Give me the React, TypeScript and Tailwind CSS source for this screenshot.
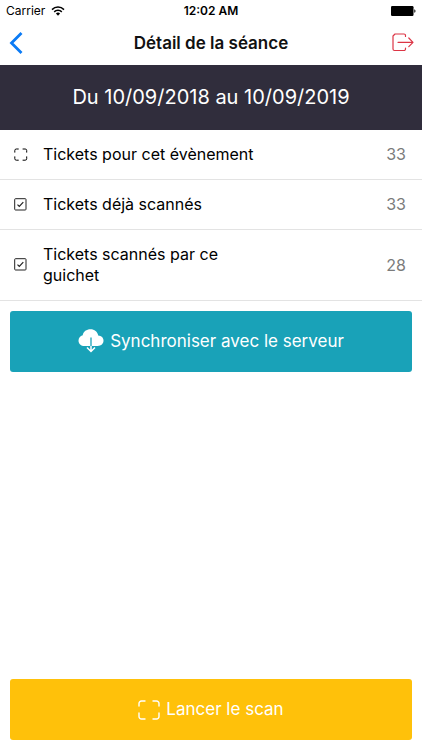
const ScanIcon = () => (
  <svg viewBox="0 0 22 20" className="w-[22px] h-5" fill="none" stroke="currentColor" strokeWidth="1.4" strokeLinecap="round" aria-hidden="true">
    <path d="M1 6V3.500A2.500 2.500 0 0 1 3.500 1H7M15 1h3.500A2.500 2.500 0 0 1 21 3.500V6M21 13v3.500a2.500 2.500 0 0 1-2.500 2.500H15M7 19H3.500A2.500 2.500 0 0 1 1 16.500V13" />
  </svg>
);

const SmallScanIcon = () => (
  <svg viewBox="0 0 14 14" className="w-[14px] h-[14px]" fill="none" stroke="currentColor" strokeWidth="1" strokeLinecap="round" aria-hidden="true">
    <path d="M.8 4.200V2.500A1.500 1.500 0 0 1 2.300 1h2M9 1h2.200a1.500 1.500 0 0 1 1.500 1.500v1.700M12.700 8.800v1.900a1.500 1.500 0 0 1-1.500 1.500H9M4.300 12.200h-2a1.500 1.500 0 0 1-1.500-1.500V8.800" />
  </svg>
);

const CheckIcon = () => (
  <svg viewBox="0 0 14 14" className="w-[14px] h-[14px]" fill="none" stroke="#222" aria-hidden="true">
    <rect x=".7" y=".7" width="11.300" height="11.300" rx=".8" />
    <path d="M3.500 6.600l1.800 1.800 4-4.200" strokeWidth="1.200" />
  </svg>
);

const rows = [
  { icon: <SmallScanIcon />, label: 'Tickets pour cet évènement', count: 33 },
  { icon: <CheckIcon />, label: 'Tickets déjà scannés', count: 33 },
  { icon: <CheckIcon />, label: 'Tickets scannés par ce guichet', count: 28 },
];

const StatusBar = () => (
  <div className="grid grid-cols-3 items-center h-[22px] px-1.5 text-xs">
    <div className="flex items-center gap-1.5">
      <span>Carrier</span>
      <svg viewBox="0 0 14 10" className="w-[14px] h-[10px]" fill="none" stroke="black" strokeWidth="1.500" aria-hidden="true">
        <path d="M1 3.600a8.500 8.500 0 0 1 12 0M3.200 5.900a5.400 5.400 0 0 1 7.600 0" />
        <path d="M7 9.800L4.900 7.600a3 3 0 0 1 4.200 0z" fill="black" stroke="none" />
      </svg>
    </div>
    <span className="text-center font-semibold">12:02 AM</span>
    <svg viewBox="0 0 25 10" className="w-[25px] h-[10px] justify-self-end" aria-hidden="true">
      <rect width="22.500" height="10" rx="1.200" />
      <path d="M23.300 3.200c1.600.5 1.600 3.100 0 3.600z" />
    </svg>
  </div>
);

const Header = () => (
  <header className="flex items-center justify-between h-[43px] px-2">
    <button type="button" aria-label="Retour" className="w-6 text-[#0b7bf5]">
      <svg viewBox="0 0 16 24" className="w-4 h-6" fill="none" stroke="currentColor" strokeWidth="2.800" aria-hidden="true">
        <path d="M13.500 1L3.500 11l10 10" />
      </svg>
    </button>
    <h1 className="text-[17px] font-semibold text-[#111]">Détail de la séance</h1>
    <button type="button" aria-label="Déconnexion" className="w-6 text-[#dc3545]">
      <svg viewBox="0 0 24 24" className="w-6 h-6" fill="none" stroke="currentColor" strokeWidth="1.200" strokeLinecap="round" strokeLinejoin="round" aria-hidden="true">
        <path d="M15.500 4.500V3.500a1.500 1.500 0 0 0-1.500-1.500H5L3 4v13a1.500 1.500 0 0 0 1.500 1.500H14a1.500 1.500 0 0 0 1.500-1.500v-1M8 10.300h15M18.800 6l4.200 4.300-4.200 4.300" />
      </svg>
    </button>
  </header>
);

const App = () => {
  return (
    <div className="flex flex-col min-h-screen bg-white text-black font-['Inter',sans-serif]">
      <StatusBar />
      <Header />
      <div className="bg-[#302d3c] text-white text-center text-xl leading-[25px] py-5">
        Du 10/09/2018 au 10/09/2019
      </div>
      <ul>
        {rows.map(row => (
          <li key={row.label} className="flex items-center border-b border-[#e3e3e3] py-3.5 pl-[14px] pr-4 text-base leading-[21px]">
            {row.icon}
            <span className="ml-[15px] w-[220px]">{row.label}</span>
            <span className="ml-auto text-[#7b7b7b]">{row.count}</span>
          </li>
        ))}
      </ul>
      <main className="flex flex-col flex-1 justify-between p-2.5">
        <button type="button" className="flex items-center justify-center gap-1.5 w-full h-[61px] rounded-[3px] bg-[#19a2b8] text-white text-[17px]">
          <svg viewBox="0 0 26 26" className="w-[26px] h-[26px]" fill="none" aria-hidden="true">
            <path d="M6.500 17C3 17 .5 14.700.5 11.700c0-2.800 1.700-4.800 4.200-5.400C5.300 2.500 8.500.3 12.500.3c4 0 7 2.500 7.700 6.200 3.200.2 5.300 2.300 5.300 5.100 0 3.200-2.300 5.400-5.800 5.400z" fill="white" />
            <path d="M13 8.500V17" stroke="#19a2b8" strokeWidth="1.300" />
            <path d="M13 17v5M9 18.500l4 4 4-4" stroke="white" strokeWidth="1.500" />
          </svg>
          Synchroniser avec le serveur
        </button>
        <button type="button" className="flex items-center justify-center gap-1.5 w-full h-[61px] rounded-[3px] bg-[#ffc10a] text-white text-[17px]">
          <ScanIcon />
          Lancer le scan
        </button>
      </main>
    </div>
  );
};

export default App;
